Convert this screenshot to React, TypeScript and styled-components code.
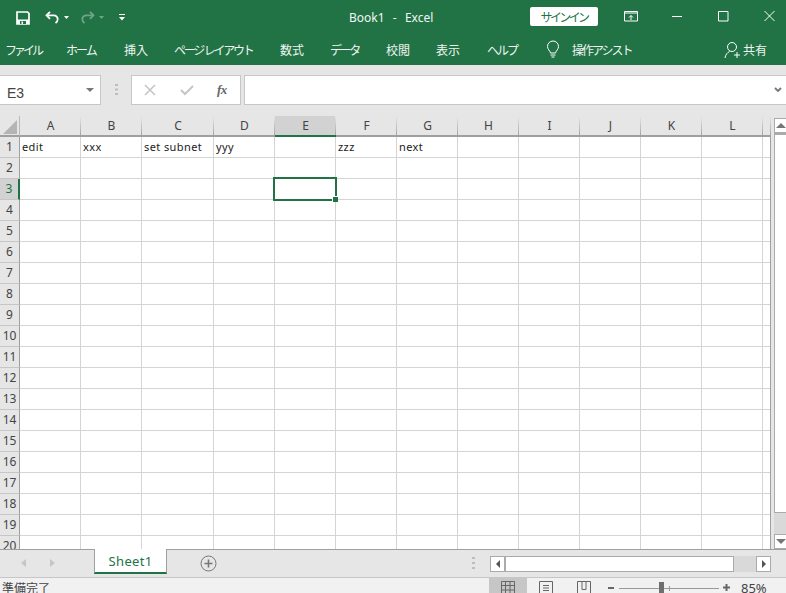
import React from "react";
import styled, { createGlobalStyle } from "styled-components";

const Global = createGlobalStyle`
  html, body { margin: 0; padding: 0; background: #e6e6e6; }
  * { box-sizing: border-box; }
`;

const JP = `"Noto Sans CJK JP", "Noto Sans", sans-serif`;

const Page = styled.div`
  width: 786px; height: 593px; overflow: hidden;
  display: flex; flex-direction: column;
  font-family: ${JP};
`;

const TitleBar = styled.div`
  height: 36px; background: #217346; color: #fff;
  position: relative; display: flex; align-items: center; flex: none;
`;
const Quick = styled.div`
  display: flex; align-items: center; padding-left: 16px; height: 100%;
`;
const QuickIcon = styled.svg<{ $ml?: number }>`
  display: block; flex: none; margin-left: ${p => p.$ml ?? 0}px; margin-top: -1px;
`;
const Title = styled.div`
  position: absolute; left: 349px; top: 9px; word-spacing: 1px;
  font: 12px/18px "Noto Sans", sans-serif; white-space: pre; color: #f2f7f4;
`;
const SignIn = styled.div`
  position: absolute; left: 530px; top: 7px; width: 68px; height: 19px;
  background: #fff; border-radius: 2px; color: #217346;
  font-size: 12px; line-height: 19px; text-align: center; letter-spacing: -2.6px;
`;
const WinIcon = styled.svg<{ $x: number; $y?: number }>`
  position: absolute; left: ${p => p.$x}px; top: ${p => p.$y ?? 10}px;
`;

const RibbonTabs = styled.div`
  height: 29px; background: #217346; color: #f0f5f2; flex: none;
  position: relative; display: flex; align-items: flex-start;
  font-size: 12px; line-height: 28px; padding-left: 5px;
`;
const RTab = styled.span<{ $w: number; $ls?: number; $ml?: number }>`
  width: ${p => p.$w}px; margin-left: ${p => p.$ml ?? 0}px; letter-spacing: ${p => p.$ls ?? 0}px;
  white-space: nowrap; flex: none;
`;
const Bulb = styled.svg`
  margin: 4px 0 0 1px; flex: none;
`;
const Share = styled.div`
  position: absolute; left: 724px; top: 1px; display: flex; align-items: center; gap: 2px; height: 26px;
`;

const FormulaBar = styled.div`
  height: 51px; padding-top: 10px; flex: none; background: #e6e6e6;
  display: flex; align-items: flex-start;
`;
const NameBox = styled.div`
  width: 101px; height: 30px; background: #fff; border: 1px solid #c6c6c6; border-left: 0;
  position: relative; padding-left: 7px; color: #444; font: 14px/35px "Liberation Sans", sans-serif;
`;
const Arrow = styled.i`
  position: absolute; right: 6px; top: 12px; width: 0; height: 0;
  border-left: 4px solid transparent; border-right: 4px solid transparent; border-top: 4px solid #777;
`;
const Dots = styled.svg`
  margin: 9px 13px 0 14px; flex: none;
`;
const FxBox = styled.div`
  width: 110px; height: 30px; background: #fff; border: 1px solid #c6c6c6; flex: none;
  display: flex; align-items: center;
`;
const FxBtn = styled.svg<{ $ml: number }>`
  margin-left: ${p => p.$ml}px; flex: none;
`;
const FxLabel = styled.span`
  margin-left: 23px; flex: none; color: #666; letter-spacing: -0.5px;
  font: italic bold 13px/14px "Liberation Serif", serif;
`;
const FormulaInput = styled.div`
  margin-left: 3px; width: 542px; height: 30px; background: #fff; border: 1px solid #c6c6c6; border-right: 0;
  display: flex; justify-content: flex-end; align-items: center; padding-right: 4px;
`;

const SheetArea = styled.div`
  height: 433px; flex: none; display: flex; overflow: hidden; background: #e6e6e6;
`;
const GridWrap = styled.div`
  width: 771px; flex: none; overflow: hidden; height: 100%;
`;
const HeaderRow = styled.div`
  display: flex; height: 21px; background: #e6e6e6;
`;
const Corner = styled.div`
  width: 20px; flex: none; border-right: 1px solid #b9b9b9; border-bottom: 2px solid #9f9f9f;
  display: flex; padding: 4px 0 0 3px;
`;
const ColHead = styled.div<{ $w: number; $on?: boolean }>`
  width: ${p => p.$w}px; flex: none; text-align: center; color: #444;
  font: 12px/19px "Noto Sans", sans-serif;
  background-color: ${p => (p.$on ? "#d2d2d2" : "#e6e6e6")};
  background-image: linear-gradient(#e6e6e6, #a6a6a6);
  background-size: 1px 100%; background-position: right top; background-repeat: no-repeat;
  border-bottom: 2px solid ${p => (p.$on ? "#217346" : "#9f9f9f")};
`;
const Body = styled.div`
  height: 412px; overflow: hidden; border-right: 1px solid #9f9f9f;
`;
const Row = styled.div`
  display: flex; height: 21px; background: #fff;
`;
const RowHead = styled.div<{ $on?: boolean }>`
  width: 20px; flex: none; text-align: center; color: ${p => (p.$on ? "#217346" : "#444")};
  font: 12px/20px "Noto Sans", sans-serif;
  background: ${p => (p.$on ? "#d2d2d2" : "#e6e6e6")};
  border-right: 1px solid #9f9f9f; border-bottom: 1px solid #c6c6c6;
  ${p => p.$on && "border-right: 2px solid #217346;"}
`;
const Cell = styled.div<{ $w: number }>`
  width: ${p => p.$w}px; flex: none; position: relative;
  border-right: 1px solid #d4d4d4; border-bottom: 1px solid #d4d4d4;
  padding-left: 2px; font: 11px/20px "Noto Sans", sans-serif; color: #222; letter-spacing: .4px;
  white-space: nowrap;
`;
const Selection = styled.div`
  position: absolute; left: -2px; top: -2px; width: 64px; height: 24px; border: 2px solid #217346; z-index: 2;
`;
const Handle = styled.div`
  position: absolute; right: -3px; bottom: -3px; width: 6px; height: 6px; background: #217346;
  border: 1px solid #fff; border-width: 1px 0 0 1px;
`;

const VScroll = styled.div`
  width: 12px; margin-left: 3px; flex: none; height: 100%; display: flex; flex-direction: column;
  padding-top: 2px;
`;
const VBtn = styled.div`
  height: 15px; flex: none; background: #fff; border: 1px solid #ababab; border-right: 0;
  display: flex; align-items: center; justify-content: center;
`;
const VThumb = styled.div`
  height: 380px; flex: none; background: #fff; border: 1px solid #ababab; border-right: 0; border-top-width: 2px;
`;
const VTrack = styled.div`
  flex: 1; background: #d9d9d9;
`;
const TriUp = styled.i`
  width: 0; height: 0; border-left: 5px solid transparent; border-right: 5px solid transparent; border-bottom: 5px solid #777;
`;
const TriDown = styled.i`
  width: 0; height: 0; border-left: 5px solid transparent; border-right: 5px solid transparent; border-top: 5px solid #777;
`;

const TabBar = styled.div`
  height: 28px; flex: none; background: #e6e6e6; position: relative; border-top: 1px solid #9f9f9f;
  display: flex; align-items: flex-start;
`;
const NavTri = styled.i<{ $dir: "l" | "r"; $ml: number }>`
  width: 0; height: 0; margin: 9px 0 0 ${p => p.$ml}px; flex: none;
  border-top: 4px solid transparent; border-bottom: 4px solid transparent;
  ${p => (p.$dir === "l" ? "border-right: 5px solid #c6c6c6;" : "border-left: 5px solid #c6c6c6;")}
`;
const SheetTab = styled.div`
  margin: -1px 0 0 39px; width: 73px; height: 25px; flex: none; background: #fff;
  border-left: 1px solid #9f9f9f; border-right: 1px solid #9f9f9f; border-bottom: 2px solid #217346;
  color: #217346; text-align: center; font: 13px/24px "Noto Sans", sans-serif; letter-spacing: .3px;
`;
const AddSheet = styled.svg`
  margin: 5px 0 0 33px; flex: none;
`;
const HScroll = styled.div`
  position: absolute; left: 490px; top: 6px; width: 281px; height: 16px; display: flex;
`;
const HDots = styled.svg`
  position: absolute; left: 472px; top: 7px;
`;
const HBtn = styled.div`
  width: 15px; flex: none; background: #fff; border: 1px solid #ababab; display: flex; align-items: center; justify-content: center;
`;
const HThumb = styled.div`
  width: 229px; flex: none; background: #fff; border: 1px solid #ababab;
`;
const HTrack = styled.div`
  flex: 1; background: #d9d9d9;
`;
const TriL = styled.i`
  width: 0; height: 0; border-top: 4px solid transparent; border-bottom: 4px solid transparent; border-right: 4px solid #555;
`;
const TriR = styled.i`
  width: 0; height: 0; border-top: 4px solid transparent; border-bottom: 4px solid transparent; border-left: 4px solid #555;
`;

const StatusBar = styled.div`
  flex: 1; background: #f1f1f1; border-top: 1px solid #c6c6c6; display: flex; align-items: flex-start;
`;
const Ready = styled.div`
  margin-left: 2px; font-size: 12px; line-height: 20px; color: #444; flex: none; width: 487px;
`;
const ViewBtn = styled.div<{ $on?: boolean }>`
  width: 38px; height: 16px; flex: none; background: ${p => (p.$on ? "#c6c6c6" : "transparent")};
  display: flex; justify-content: center; padding-top: 3px;
`;
const Zoom = styled.div`
  display: flex; align-items: flex-start; margin-left: 5px; flex: none;
`;
const Slider = styled.div`
  width: 100px; height: 1px; margin: 10px 4px 0 4px; background: #9a9a9a; position: relative;
`;
const Thumb = styled.i`
  position: absolute; left: 40px; top: -6px; width: 5px; height: 12px; background: #6f6f6f;
`;
const Tick = styled.i`
  position: absolute; left: 50px; top: -2px; width: 1px; height: 5px; background: #9a9a9a;
`;
const Pct = styled.div`
  margin-left: 11px; font: 13px/20px "Noto Sans", sans-serif; color: #444;
`;
const SignGlyph = styled.svg`
  margin-top: 6px; flex: none;
`;

const cols: [string, number][] = [
  ["A", 61], ["B", 61], ["C", 72], ["D", 61], ["E", 61], ["F", 61], ["G", 61],
  ["H", 61], ["I", 61], ["J", 61], ["K", 61], ["L", 61], ["", 8],
];
const first = ["edit", "xxx", "set subnet", "yyy", "", "zzz", "next"];
const ribbon: [string, number, number][] = [
  ["ファイル", 61, -3], ["ホーム", 58, -2], ["挿入", 50, 0], ["ページ レイアウト", 106, -2.2], ["数式", 50, 0],
  ["データ", 56, -2.4], ["校閲", 50, 0], ["表示", 51, 0], ["ヘルプ", 57, -2],
];

export default function App() {
  return (
    <Page>
      <Global />
      <TitleBar>
        <Quick>
          <QuickIcon width="14" height="14" viewBox="0 0 14 14" fill="none">
            <path d="M1 1h10.500L13 2.500V13H1z" stroke="#fff" strokeWidth="1.700" />
            <path d="M1 8.500h12v4.500H1z" fill="#fff" />
            <rect x="4" y="10" width="6" height="3" fill="#217346" />
            <rect x="5.500" y="10.500" width="1.500" height="2.500" fill="#fff" />
          </QuickIcon>
          <QuickIcon $ml={15} width="15" height="13" viewBox="0 0 15 13" fill="none">
            <path d="M5 .8 1.500 4.300 5 7.800" stroke="#fff" strokeWidth="1.800" />
            <path d="M2 4.300h6.500a4 4 0 0 1 4.200 4c0 1.800-1 3-2.200 3.800" stroke="#fff" strokeWidth="1.800" />
          </QuickIcon>
          <QuickIcon $ml={4} width="5" height="3" viewBox="0 0 5 3"><path d="M0 0h5L2.500 3z" fill="#fff" /></QuickIcon>
          <QuickIcon $ml={11} width="15" height="13" viewBox="0 0 15 13" fill="none" opacity=".35">
            <path d="M10 .8l3.500 3.500L10 7.800" stroke="#fff" strokeWidth="1.800" />
            <path d="M13 4.300H6.500a4 4 0 0 0-4.200 4c0 1.800 1 3 2.200 3.800" stroke="#fff" strokeWidth="1.800" />
          </QuickIcon>
          <QuickIcon $ml={4} width="5" height="3" viewBox="0 0 5 3" opacity=".35"><path d="M0 0h5L2.500 3z" fill="#fff" /></QuickIcon>
          <QuickIcon $ml={15} width="6" height="7" viewBox="0 0 6 7"><path d="M0 0h6v1H0zM0 3h6L3 6.500z" fill="#fff" /></QuickIcon>
        </Quick>
        <Title>{"Book1  -  Excel"}</Title>
        <SignIn>サインイン</SignIn>
        <WinIcon $x={624} $y={11} width="14" height="11" viewBox="0 0 14 11" fill="none">
          <path d="M.5.500h13v9.500H.500z" stroke="#fff" /><path d="M.5 2h13" stroke="#fff" />
          <path d="M7 9V4.500M5 6.500l2-2 2 2" stroke="#fff" />
        </WinIcon>
        <WinIcon $x={672} width="11" height="12" viewBox="0 0 11 12"><path d="M0 6.500h10" stroke="#fff" /></WinIcon>
        <WinIcon $x={718} width="11" height="12" viewBox="0 0 11 12" fill="none"><path d="M.5 1.500h9.500v9.500H.5z" stroke="#fff" /></WinIcon>
        <WinIcon $x={764} width="11" height="12" viewBox="0 0 11 12" fill="none"><path d="M.5 1l10 10M10.500 1l-10 10" stroke="#fff" /></WinIcon>
      </TitleBar>
      <RibbonTabs>
        {ribbon.map(([t, w, ls]) => <RTab key={t} $w={w} $ls={ls}>{t}</RTab>)}
        <Bulb width="16" height="20" viewBox="0 0 16 20" fill="none">
          <path d="M5.500 13C5 10.500 2.500 9.500 2.500 6.500a5.500 5.500 0 0 1 11 0c0 3-2.500 4-3 6.500zM5.500 15h5M6.500 17h3" stroke="#fff" />
        </Bulb>
        <RTab $w={70} $ml={11} $ls={-2}>操作アシスト</RTab>
        <Share>
          <svg width="17" height="18" viewBox="0 0 17 18" fill="none">
            <circle cx="8" cy="6" r="4.500" stroke="#fff" />
            <path d="M1 17c.5-3.500 2.500-5.500 4.500-6.500M10 14h6M13 11v6" stroke="#fff" />
          </svg>
          <span>共有</span>
        </Share>
      </RibbonTabs>
      <FormulaBar>
        <NameBox>E3<Arrow /></NameBox>
        <Dots width="3" height="11" viewBox="0 0 3 11"><path d="M0 0h3v2H0zM0 4.500h3v2H0zM0 9h3v2H0z" fill="#bdbdbd" /></Dots>
        <FxBox>
          <FxBtn $ml={12} width="13" height="12" viewBox="0 0 13 12" fill="none"><path d="M1 1l10 10M11 1 1 11" stroke="#c6c6c6" strokeWidth="1.600" /></FxBtn>
          <FxBtn $ml={23} width="14" height="12" viewBox="0 0 14 12" fill="none"><path d="M1 6l4 4 8-8" stroke="#c6c6c6" strokeWidth="2" /></FxBtn>
          <FxLabel>fx</FxLabel>
        </FxBox>
        <FormulaInput>
          <svg width="8" height="6" viewBox="0 0 8 6" fill="none"><path d="M1 1l3 3 3-3" stroke="#777" strokeWidth="1.800" /></svg>
        </FormulaInput>
      </FormulaBar>
      <SheetArea>
        <GridWrap>
          <HeaderRow>
            <Corner>
              <svg width="15" height="14" viewBox="0 0 15 14"><path d="M14 0v14H0z" fill="#b4b4b4" /></svg>
            </Corner>
            {cols.map(([c, w]) => <ColHead key={c || "x"} $w={w} $on={c === "E"}>{c}</ColHead>)}
          </HeaderRow>
          <Body>
            {Array.from({ length: 20 }, (_, r) => (
              <Row key={r}>
                <RowHead $on={r === 2}>{r + 1}</RowHead>
                {cols.map(([c, w], i) => (
                  <Cell key={c || "x"} $w={w}>
                    {r === 0 ? first[i] : null}
                    {r === 2 && c === "E" ? <Selection><Handle /></Selection> : null}
                  </Cell>
                ))}
              </Row>
            ))}
          </Body>
        </GridWrap>
        <VScroll>
          <VBtn><TriUp /></VBtn>
          <VThumb />
          <VTrack />
          <VBtn><TriDown /></VBtn>
        </VScroll>
      </SheetArea>
      <TabBar>
        <NavTri $dir="l" $ml={21} />
        <NavTri $dir="r" $ml={24} />
        <SheetTab>Sheet1</SheetTab>
        <AddSheet width="17" height="17" viewBox="0 0 17 17" fill="none">
          <circle cx="8.500" cy="8.500" r="7.500" stroke="#777" />
          <path d="M8.500 4.500v8M4.500 8.500h8" stroke="#777" strokeWidth="1.600" />
        </AddSheet>
        <HDots width="3" height="13" viewBox="0 0 3 13"><path d="M0 0h3v2H0zM0 5h3v2H0zM0 10h3v2H0z" fill="#bdbdbd" /></HDots>
        <HScroll>
          <HBtn><TriL /></HBtn>
          <HThumb />
          <HTrack />
          <HBtn><TriR /></HBtn>
        </HScroll>
      </TabBar>
      <StatusBar>
        <Ready>準備完了</Ready>
        <ViewBtn $on>
          <svg width="14" height="14" viewBox="0 0 14 14" fill="none"><path d="M.5.5h13v13H.5zM.5 4.500h13M.5 9h13M4.500.5v13M9 .5v13" stroke="#666" /></svg>
        </ViewBtn>
        <ViewBtn>
          <svg width="14" height="14" viewBox="0 0 14 14" fill="none"><path d="M.5.500h13v13H.5zM4 4.500h6M4 7h6M4 9.500h6" stroke="#666" /></svg>
        </ViewBtn>
        <ViewBtn>
          <svg width="14" height="14" viewBox="0 0 14 14" fill="none"><path d="M.5 14V.5h13V14M5 .5v8h4v-8" stroke="#666" /></svg>
        </ViewBtn>
        <Zoom>
          <SignGlyph width="7" height="7" viewBox="0 0 7 7"><path d="M0 3h6v2H0z" fill="#666" /></SignGlyph>
          <Slider><Thumb /><Tick /></Slider>
          <SignGlyph width="7" height="7" viewBox="0 0 7 7"><path d="M0 2.500h7v2H0zM2.500 0h2v7h-2z" fill="#666" /></SignGlyph>
          <Pct>85%</Pct>
        </Zoom>
      </StatusBar>
    </Page>
  );
}
